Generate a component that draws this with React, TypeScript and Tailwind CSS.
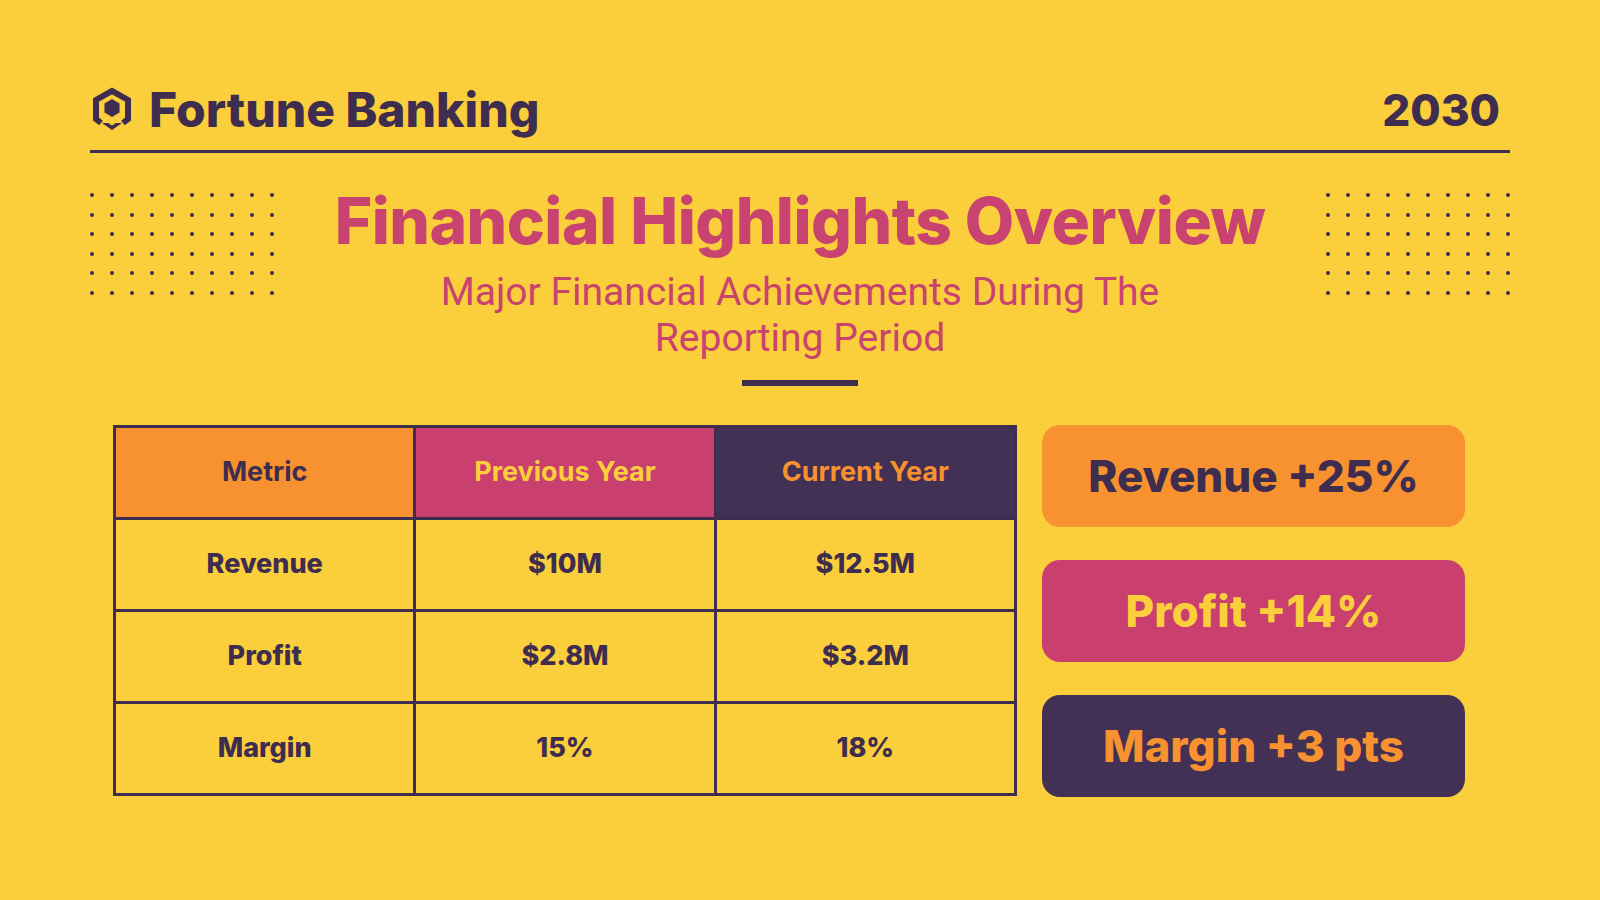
import React from 'react';

const rows = [
  { metric: 'Revenue', prev: '$10M', curr: '$12.5M' },
  { metric: 'Profit', prev: '$2.8M', curr: '$3.2M' },
  { metric: 'Margin', prev: '15%', curr: '18%' },
];

function Logo() {
  return (
    <svg width="40" height="46" viewBox="0 0 40 46" className="shrink-0">
      <path
        d="M9 36 L4 32 V13 L20 4 L36 13 V32 L31 36"
        fill="none"
        stroke="#3E2D4F"
        strokeWidth="6"
        strokeLinejoin="miter"
      />
      <polygon points="20,12 27.5,16.5 27.5,25.5 20,30 12.5,25.5 12.5,16.5" fill="#3E2D4F" />
      <polygon points="10,36 16,36 20,38.5 24,36 30,36 20,43" fill="#3E2D4F" />
    </svg>
  );
}

function Dots() {
  return (
    <div className="flex flex-col gap-[15.5px]">
      {Array.from({ length: 6 }).map((_, r) => (
        <div key={r} className="flex gap-[16px]">
          {Array.from({ length: 10 }).map((_, c) => (
            <div key={c} className="w-[4px] h-[4px] rounded-full bg-[#3E2D4F]" />
          ))}
        </div>
      ))}
    </div>
  );
}

export default function App() {
  return (
    <div
      className="w-[1600px] h-[900px] bg-[#FBCE3B] px-[90px] pt-[82px] text-[#3E2D4F]"
      style={{ fontFamily: 'Inter, "Liberation Sans", sans-serif' }}
    >
      {/* Header */}
      <div className="flex items-center justify-between border-b-[3px] border-[#3E2D4F] pb-[12px]">
        <div className="flex items-center gap-[17px] pl-[2px]">
          <Logo />
          <span className="text-[48px] leading-[56px] font-extrabold">Fortune Banking</span>
        </div>
        <span className="text-[44px] leading-[56px] font-extrabold pr-[10px]">2030</span>
      </div>

      {/* Title block */}
      <div className="flex justify-between items-start pt-[40px]">
        <Dots />
        <div className="flex flex-col items-center -mt-[8px]">
          <h1 className="text-[64px] leading-[72px] font-extrabold text-[#C8436F] tracking-[-0.5px]">
            Financial Highlights Overview
          </h1>
          <p
            className="text-[39px] leading-[46px] text-[#C8436F] text-center w-[800px] mt-[12px]"
            style={{ fontFamily: 'Roboto, "Liberation Sans", sans-serif' }}
          >
            Major Financial Achievements During The
            <br />
            Reporting Period
          </p>
          <div className="w-[116px] h-[6px] bg-[#3E2D4F] mt-[19px]" />
        </div>
        <Dots />
      </div>

      {/* Table and badges */}
      <div className="flex items-start gap-[25px] pl-[23px] mt-[39px]">
        <table className="border-collapse border-[3px] border-[#3E2D4F] w-[904px] table-fixed text-center">
          <thead>
            <tr className="h-[92px] text-[27px] font-extrabold">
              <th className="border-[3px] border-[#3E2D4F] bg-[#F8912F] text-[#3E2D4F]">Metric</th>
              <th className="border-[3px] border-[#3E2D4F] bg-[#C9406F] text-[#FBCE3B]">Previous Year</th>
              <th className="border-[3px] border-[#3E2D4F] bg-[#433055] text-[#F8912F]">Current Year</th>
            </tr>
          </thead>
          <tbody>
            {rows.map((r) => (
              <tr key={r.metric} className="h-[92px] text-[27px] font-extrabold">
                <td className="border-[3px] border-[#3E2D4F]">{r.metric}</td>
                <td className="border-[3px] border-[#3E2D4F]">{r.prev}</td>
                <td className="border-[3px] border-[#3E2D4F]">{r.curr}</td>
              </tr>
            ))}
          </tbody>
        </table>

        <div className="flex flex-col gap-[33px] w-[423px]">
          <div className="h-[102px] rounded-[18px] bg-[#F8912F] flex items-center justify-center text-[44px] font-extrabold text-[#3E2D4F]">
            Revenue +25%
          </div>
          <div className="h-[102px] rounded-[18px] bg-[#C9406F] flex items-center justify-center text-[44px] font-extrabold text-[#FBCE3B]">
            Profit +14%
          </div>
          <div className="h-[102px] rounded-[18px] bg-[#433055] flex items-center justify-center text-[44px] font-extrabold text-[#F8912F]">
            Margin +3 pts
          </div>
        </div>
      </div>
    </div>
  );
}
